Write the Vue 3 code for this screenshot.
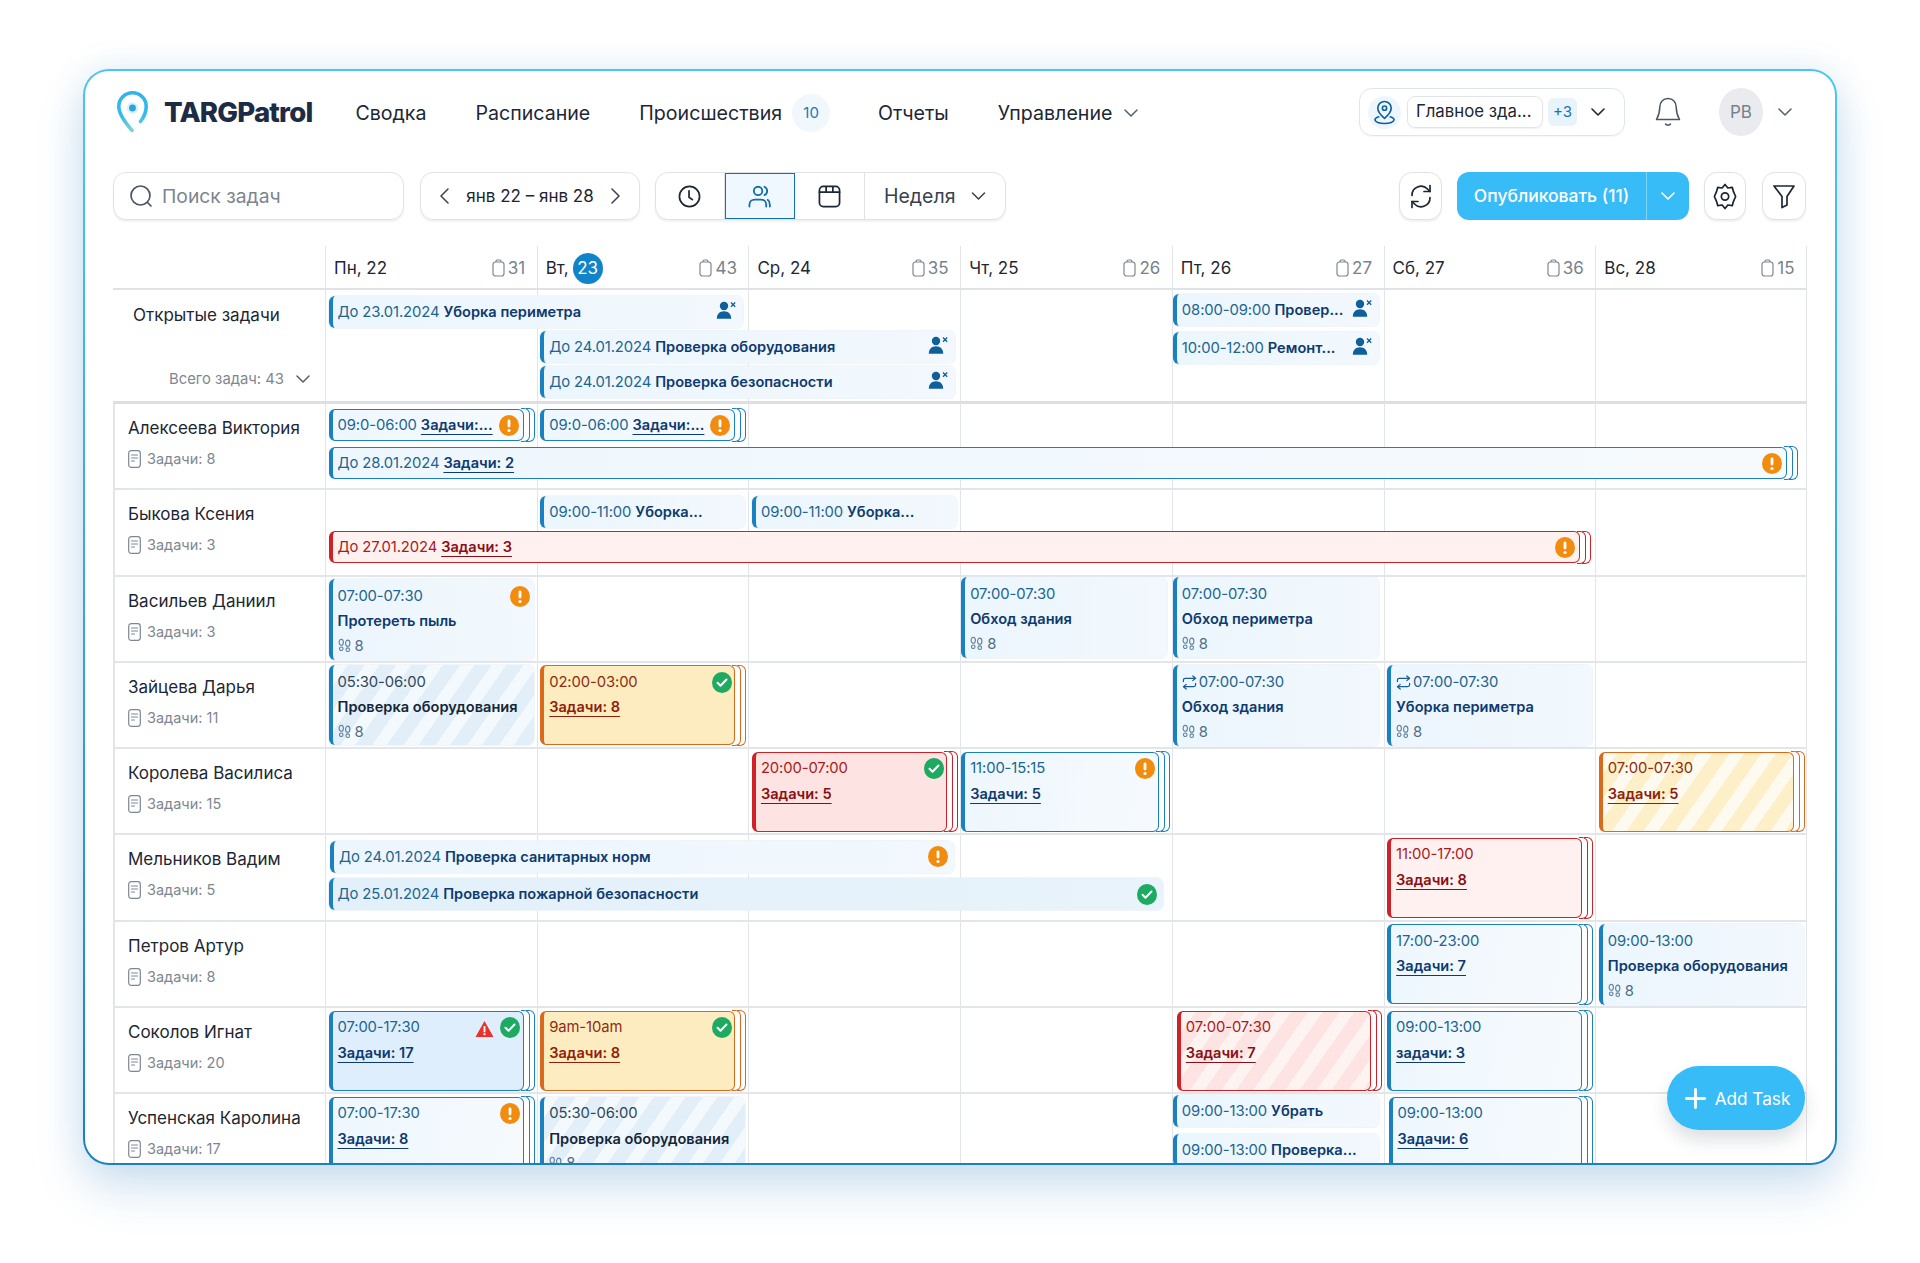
<script setup>
const days = [
  { label: 'Пн, 22', count: 31 },
  { label: 'Вт,', today: '23', count: 43 },
  { label: 'Ср, 24', count: 35 },
  { label: 'Чт, 25', count: 26 },
  { label: 'Пт, 26', count: 27 },
  { label: 'Сб, 27', count: 36 },
  { label: 'Вс, 28', count: 15 }
]

const rows = [
  {
    name: 'Алексеева Виктория', tasks: 8, lanes: 'lanes-a',
    events: [
      { col: 1, lane: 1, chip: true, tone: 'blue', stack: true, time: '09:0-06:00', title: 'Задачи:...', link: true, icon: 'alert' },
      { col: 2, lane: 1, chip: true, tone: 'blue', stack: true, time: '09:0-06:00', title: 'Задачи:...', link: true, icon: 'alert' },
      { col: 1, span: 7, lane: 2, chip: true, tone: 'blue', stack: true, time: 'До 28.01.2024', title: 'Задачи: 2', link: true, icon: 'alert', inset: 20 }
    ]
  },
  {
    name: 'Быкова Ксения', tasks: 3, lanes: 'lanes-b',
    events: [
      { col: 2, lane: 1, chip: true, plain: true, tone: 'blue', time: '09:00-11:00', title: 'Уборка...' },
      { col: 3, lane: 1, chip: true, plain: true, tone: 'blue', time: '09:00-11:00', title: 'Уборка...' },
      { col: 1, span: 6, lane: 2, chip: true, tone: 'red', stack: true, time: 'До 27.01.2024', title: 'Задачи: 3', link: true, icon: 'alert', inset: 15 }
    ]
  },
  {
    name: 'Васильев Даниил', tasks: 3,
    events: [
      { col: 1, plain: true, tone: 'blue', time: '07:00-07:30', title: 'Протереть пыль', foot: true, icon: 'alert' },
      { col: 4, plain: true, tone: 'blue', nudge: true, high: true, time: '07:00-07:30', title: 'Обход здания', foot: true },
      { col: 5, plain: true, tone: 'blue', nudge: true, high: true, time: '07:00-07:30', title: 'Обход периметра', foot: true }
    ]
  },
  {
    name: 'Зайцева Дарья', tasks: 11,
    events: [
      { col: 1, plain: true, stripe: true, tone: 'slate', time: '05:30-06:00', title: 'Проверка оборудования', foot: true },
      { col: 2, tone: 'orange', stack: true, time: '02:00-03:00', title: 'Задачи: 8', link: true, icon: 'check' },
      { col: 5, plain: true, tone: 'blue', nudge: true, repeat: true, time: '07:00-07:30', title: 'Обход здания', foot: true },
      { col: 6, plain: true, tone: 'blue', repeat: true, time: '07:00-07:30', title: 'Уборка периметра', foot: true }
    ]
  },
  {
    name: 'Королева Василиса', tasks: 15,
    events: [
      { col: 3, tone: 'red', strong: true, stack: true, time: '20:00-07:00', title: 'Задачи: 5', link: true, icon: 'check' },
      { col: 4, tone: 'blue', nudge: true, stack: true, time: '11:00-15:15', title: 'Задачи: 5', link: true, icon: 'alert' },
      { col: 7, stripe: true, tone: 'orange', stack: true, time: '07:00-07:30', title: 'Задачи: 5', link: true }
    ]
  },
  {
    name: 'Мельников Вадим', tasks: 5, lanes: 'lanes-c',
    events: [
      { col: 1, span: 3, lane: 1, chip: true, plain: true, tone: 'blue', shift: true, time: 'До 24.01.2024', title: 'Проверка санитарных норм', icon: 'alert', inset: 6 },
      { col: 1, span: 4, lane: 2, chip: true, plain: true, deep: true, tone: 'blue', time: 'До 25.01.2024', title: 'Проверка пожарной безопасности', icon: 'check', inset: 9 },
      { col: 6, tone: 'red', stack: true, time: '11:00-17:00', title: 'Задачи: 8', link: true }
    ]
  },
  {
    name: 'Петров Артур', tasks: 8,
    events: [
      { col: 6, tone: 'blue', stack: true, time: '17:00-23:00', title: 'Задачи: 7', link: true },
      { col: 7, plain: true, tone: 'blue', time: '09:00-13:00', title: 'Проверка оборудования', foot: true }
    ]
  },
  {
    name: 'Соколов Игнат', tasks: 20,
    events: [
      { col: 1, tone: 'blue', strong: true, stack: true, time: '07:00-17:30', title: 'Задачи: 17', link: true, icon: 'check', warn: true },
      { col: 2, tone: 'orange', stack: true, time: '9am-10am', title: 'Задачи: 8', link: true, icon: 'check' },
      { col: 5, stripe: true, tone: 'red', stack: true, shift: true, time: '07:00-07:30', title: 'Задачи: 7', link: true },
      { col: 6, tone: 'blue', stack: true, time: '09:00-13:00', title: 'задачи: 3', link: true }
    ]
  },
  {
    name: 'Успенская Каролина', tasks: 17, lanes: 'lanes-d',
    events: [
      { col: 1, tone: 'blue', stack: true, time: '07:00-17:30', title: 'Задачи: 8', link: true, icon: 'alert' },
      { col: 2, plain: true, stripe: true, tone: 'slate', time: '05:30-06:00', title: 'Проверка оборудования', foot: true },
      { col: 5, lane: 1, chip: true, plain: true, tone: 'blue', nudge: true, time: '09:00-13:00', title: 'Убрать' },
      { col: 5, lane: 2, chip: true, plain: true, tone: 'blue', nudge: true, time: '09:00-13:00', title: 'Проверка...' },
      { col: 6, tone: 'blue', stack: true, shift: true, time: '09:00-13:00', title: 'Задачи: 6', link: true }
    ]
  }
]

const openTasks = [
  { col: 1, lane: 1, time: 'До 23.01.2024', title: 'Уборка периметра', span: 2, inset: 5 },
  { col: 2, lane: 2, time: 'До 24.01.2024', title: 'Проверка оборудования', span: 2, inset: 5 },
  { col: 2, lane: 3, time: 'До 24.01.2024', title: 'Проверка безопасности', span: 2, inset: 5 },
  { col: 5, lane: 1, time: '08:00-09:00', title: 'Провер...', nudge: true, lift: 'up' },
  { col: 5, lane: 2, time: '10:00-12:00', title: 'Ремонт...', nudge: true, lift: 'down' }
]

function place(ev) {
  const style = { gridColumn: `${ev.col + 1} / span ${ev.span || 1}` }
  if (ev.lane) style.gridRow = String(ev.lane)
  if (ev.inset) style.marginRight = `${ev.inset}px`
  return style
}

function classes(ev) {
  return [
    ev.chip ? 'chip' : 'tall',
    `tone-${ev.tone}`,
    {
      plain: ev.plain,
      stack: ev.stack,
      stripe: ev.stripe,
      strong: ev.strong,
      nudge: ev.nudge,
      shift: ev.shift,
      high: ev.high,
      deep: ev.deep
    }
  ]
}
</script>

<template>
  <div class="page">
    <div class="card">
      <header class="topbar">
        <div class="brand">
          <svg class="pin" viewBox="0 0 31 42" fill="none">
            <defs>
              <linearGradient id="pinG" x1="0" y1="0" x2="0" y2="42" gradientUnits="userSpaceOnUse">
                <stop offset="0" stop-color="#2db3f1" />
                <stop offset="0.6" stop-color="#39bbe8" />
                <stop offset="1" stop-color="#8ad8cc" />
              </linearGradient>
            </defs>
            <path d="M23.5 30.5C27 26 29.2 20.5 29.2 15.5A13.7 13.7 0 0 0 1.8 15.5C1.8 22 8.5 32 15 39.5" stroke="url(#pinG)" stroke-width="3.6" stroke-linecap="round" />
            <circle cx="15.5" cy="17" r="5.8" fill="#d8f0fb" />
            <circle cx="15.5" cy="17" r="3.4" fill="#2aa3da" />
          </svg>
          <span class="brand-name">TARGPatrol</span>
        </div>
        <nav class="nav">
          <a>Сводка</a>
          <a>Расписание</a>
          <a class="with-badge">Происшествия<span class="badge">10</span></a>
          <a>Отчеты</a>
          <a class="with-chev">Управление
            <svg class="chev" viewBox="0 0 14 8" fill="none"><path d="M1 1l6 6 6-6" stroke="#56606c" stroke-width="1.5" stroke-linecap="round" stroke-linejoin="round" /></svg>
          </a>
        </nav>
        <div class="top-right">
          <div class="location">
            <span class="loc-icon">
              <svg viewBox="0 0 24 26" fill="none" stroke="#0f5f9c" stroke-width="1.7" stroke-linecap="round" stroke-linejoin="round">
                <path d="M12 2a7 7 0 0 0-7 7c0 4 3.800 7.800 7 10.600 3.200-2.800 7-6.600 7-10.600a7 7 0 0 0-7-7z" />
                <circle cx="12" cy="9" r="2.200" />
                <path d="M6 18c-2.500.8-4 2-4 3.200C2 23.300 6.500 25 12 25s10-1.700 10-3.800c0-1.200-1.500-2.400-4-3.200" />
              </svg>
            </span>
            <span class="loc-chip">Главное зда...</span>
            <span class="loc-more">+3</span>
            <svg class="chev dark" viewBox="0 0 14 8" fill="none"><path d="M1 1l6 6 6-6" stroke="#1d2733" stroke-width="1.6" stroke-linecap="round" stroke-linejoin="round" /></svg>
          </div>
          <svg class="bell" viewBox="0 0 26 30" fill="none" stroke="#4b5563" stroke-width="1.5" stroke-linecap="round" stroke-linejoin="round">
            <path d="M13 1.500c-5 0-8.200 4-8.200 8.500 0 6-1.300 9-3.300 12.500h23c-2-3.500-3.300-6.500-3.300-12.500 0-4.500-3.200-8.500-8.200-8.500z" />
            <path d="M10.500 27c1 1.500 4 1.500 5 0" />
          </svg>
          <span class="avatar">РВ</span>
          <svg class="chev" viewBox="0 0 14 8" fill="none"><path d="M1 1l6 6 6-6" stroke="#56606c" stroke-width="1.5" stroke-linecap="round" stroke-linejoin="round" /></svg>
        </div>
      </header>

      <div class="toolbar">
        <label class="search">
          <svg viewBox="0 0 24 24" fill="none" stroke="#4b5563" stroke-width="1.7" stroke-linecap="round"><circle cx="11.500" cy="11.500" r="9.500" /><path d="M18.500 18.500l3.500 3.500" /></svg>
          <span>Поиск задач</span>
        </label>
        <div class="dates">
          <svg viewBox="0 0 9 16" fill="none"><path d="M8 1L1 8l7 7" stroke="#39424e" stroke-width="1.5" stroke-linecap="round" stroke-linejoin="round" /></svg>
          <span>янв 22 – янв 28</span>
          <svg viewBox="0 0 9 16" fill="none"><path d="M1 1l7 7-7 7" stroke="#39424e" stroke-width="1.5" stroke-linecap="round" stroke-linejoin="round" /></svg>
        </div>
        <div class="segments">
          <button class="seg">
            <svg viewBox="0 0 24 24" fill="none" stroke="#1d2733" stroke-width="1.8" stroke-linecap="round" stroke-linejoin="round"><circle cx="12" cy="12" r="10.5" /><path d="M11.500 6v6.800l3.500 2.500" /></svg>
          </button>
          <button class="seg active">
            <svg viewBox="0 0 24 24" fill="none" stroke="#136ca8" stroke-width="1.9" stroke-linecap="round" stroke-linejoin="round"><circle cx="10.500" cy="6.200" r="4.400" /><path d="M1.500 22.500v-1.800c0-3.500 2.500-5.500 5.500-5.500h6.500c3 0 5.500 2 5.500 5.500v1.800" /><path d="M17.200 1.800c1.800 1 2.800 2.600 2.800 4.400s-1 3.400-2.800 4.400" /><path d="M20.500 15.500c1.500 1 2.300 3 2.300 5v2" /></svg>
          </button>
          <button class="seg">
            <svg viewBox="0 0 24 24" fill="none" stroke="#1d2733" stroke-width="1.8" stroke-linecap="round" stroke-linejoin="round"><rect x="1.500" y="1.500" width="21" height="21" rx="4" /><path d="M1.500 7.500h21M8.500 2v5M15.500 2v5" /></svg>
          </button>
          <button class="seg week">Неделя
            <svg class="chev" viewBox="0 0 14 8" fill="none"><path d="M1 1l6 6 6-6" stroke="#39424e" stroke-width="1.5" stroke-linecap="round" stroke-linejoin="round" /></svg>
          </button>
        </div>
        <div class="tools">
          <button class="tool refresh">
            <svg viewBox="0 0 24 26" fill="none" stroke="#1d2733" stroke-width="1.7" stroke-linecap="round" stroke-linejoin="round"><path d="M3 12a9 9 0 0 1 15.500-6.500L21 8" /><path d="M21 2v6h-6" /><path d="M21 14a9 9 0 0 1-15.500 6.500L3 18" /><path d="M3 24v-6h6" /></svg>
          </button>
          <div class="publish">
            <span class="pub-label">Опубликовать (11)</span>
            <span class="pub-arrow">
              <svg class="chev" viewBox="0 0 14 8" fill="none"><path d="M1 1l6 6 6-6" stroke="#fff" stroke-width="1.6" stroke-linecap="round" stroke-linejoin="round" /></svg>
            </span>
          </div>
          <button class="tool gear">
            <svg viewBox="0 0 24 28" fill="none" stroke="#1d2733" stroke-width="1.8" stroke-linecap="round" stroke-linejoin="round"><path d="M12 1.500l3 3.700 4.500-.7 1.300 4.500L23 14l-2.200 5-1.300 4.500-4.500-.7-3 3.700-3-3.700-4.500.7L3.200 19 1 14l2.200-5 1.300-4.500 4.500.7z" /><circle cx="12" cy="14" r="3.800" /></svg>
          </button>
          <button class="tool filter">
            <svg viewBox="0 0 24 26" fill="none" stroke="#1d2733" stroke-width="1.7" stroke-linecap="round" stroke-linejoin="round"><path d="M2 2.500h20L15 13v8.500L10 24V13z" /></svg>
          </button>
        </div>
      </div>

      <div class="sheet">
        <div class="head-row">
          <div class="corner"></div>
          <div v-for="d in days" :key="d.label" class="day">
            <span class="day-name">{{ d.label }}<b v-if="d.today" class="today">{{ d.today }}</b></span>
            <span class="day-count">
              <svg viewBox="0 0 13 18" fill="none" stroke="#7d8792" stroke-width="1.2"><rect x="1" y="3" width="11" height="14" rx="2.500" /><path d="M4 3V2.200C4 1.500 4.500 1 5.200 1h2.600C8.500 1 9 1.500 9 2.200V3" /></svg>
              {{ d.count }}
            </span>
          </div>
        </div>

        <div class="row open-row">
          <div class="name-cell open-cell">
            <div class="open-title">Открытые задачи</div>
            <div class="open-total">Всего задач: 43
              <svg class="chev" viewBox="0 0 14 8" fill="none"><path d="M1 1l6 6 6-6" stroke="#56606c" stroke-width="1.5" stroke-linecap="round" stroke-linejoin="round" /></svg>
            </div>
          </div>
          <div v-for="c in 7" :key="c" class="cell" :style="{ gridColumn: c + 1 }"></div>
          <div v-for="(ev, i) in openTasks" :key="i" class="ev chip plain tone-blue" :class="[{ nudge: ev.nudge }, ev.lift]" :style="place(ev)">
            <span class="time">{{ ev.time }}</span>
            <span class="title">{{ ev.title }}</span>
            <svg class="user-x" viewBox="0 0 21 18" fill="#0f5f9c">
              <circle cx="8" cy="5" r="4.200" />
              <path d="M.8 17.800c0-4.800 3-7.500 7.200-7.500s7.200 2.700 7.200 7.500z" />
              <path d="M15 1.500l4.200 4.200M19.200 1.500L15 5.700" stroke="#0f5f9c" stroke-width="1.3" fill="none" />
            </svg>
          </div>
        </div>

        <div v-for="r in rows" :key="r.name" class="row person" :class="r.lanes">
          <div class="name-cell">
            <div class="person-name">{{ r.name }}</div>
            <div class="person-tasks">
              <svg viewBox="0 0 13 18" fill="none" stroke="#7d8792" stroke-width="1.2" stroke-linecap="round"><rect x=".7" y=".7" width="11.600" height="16.600" rx="2.500" /><path d="M3.500 5h6M3.500 8h6M3.500 11h3" /></svg>
              Задачи: {{ r.tasks }}
            </div>
          </div>
          <div v-for="c in 7" :key="c" class="cell" :style="{ gridColumn: c + 1 }"></div>
          <div v-for="(ev, i) in r.events" :key="i" class="ev" :class="classes(ev)" :style="place(ev)">
            <template v-if="ev.chip">
              <span class="time">{{ ev.time }}</span>
              <span class="title" :class="{ link: ev.link }">{{ ev.title }}</span>
              <svg v-if="ev.icon === 'alert'" class="status" viewBox="0 0 20 21"><ellipse cx="10" cy="10.500" rx="10" ry="10.500" fill="#f28c0f" /><rect x="8.600" y="4.500" width="2.800" height="8" rx="1.400" fill="#fff" /><circle cx="10" cy="15.500" r="1.600" fill="#fff" /></svg>
              <svg v-if="ev.icon === 'check'" class="status" viewBox="0 0 20 21"><ellipse cx="10" cy="10.500" rx="10" ry="10.500" fill="#1faa62" /><path d="M5.500 10.800l3 3 6-6.300" fill="none" stroke="#fff" stroke-width="2" stroke-linecap="round" stroke-linejoin="round" /></svg>
            </template>
            <template v-else>
              <div class="top-line">
                <span class="time">
                  <svg v-if="ev.repeat" class="repeat" viewBox="0 0 16 16" fill="none" stroke="#185d92" stroke-width="1.3" stroke-linecap="round" stroke-linejoin="round"><path d="M1.500 7V5.500c0-1.400 1-2 2-2h11M11.500 1l3 2.500-3 2.500" /><path d="M14.500 9v1.500c0 1.400-1 2-2 2h-11M4.500 15l-3-2.500 3-2.500" /></svg>{{ ev.time }}
                </span>
                <span class="status-wrap">
                  <svg v-if="ev.warn" class="status warn" viewBox="0 0 20 19"><path d="M10 1L19.500 18H.5z" fill="#e8322b" /><rect x="9" y="6.500" width="2" height="6.500" fill="#fff" /><rect x="9" y="14" width="2" height="2" fill="#fff" /></svg>
                  <svg v-if="ev.icon === 'alert'" class="status" viewBox="0 0 20 21"><ellipse cx="10" cy="10.500" rx="10" ry="10.500" fill="#f28c0f" /><rect x="8.600" y="4.500" width="2.800" height="8" rx="1.400" fill="#fff" /><circle cx="10" cy="15.500" r="1.600" fill="#fff" /></svg>
                  <svg v-if="ev.icon === 'check'" class="status" viewBox="0 0 20 21"><ellipse cx="10" cy="10.500" rx="10" ry="10.500" fill="#1faa62" /><path d="M5.500 10.800l3 3 6-6.300" fill="none" stroke="#fff" stroke-width="2" stroke-linecap="round" stroke-linejoin="round" /></svg>
                </span>
              </div>
              <div class="title" :class="{ link: ev.link }"><span>{{ ev.title }}</span></div>
              <div v-if="ev.foot" class="foot">
                <svg viewBox="0 0 14 15" fill="none" stroke="#5f7f9c" stroke-width="1.2"><ellipse cx="3.500" cy="4" rx="2.300" ry="3.300" /><circle cx="3.500" cy="11" r="1.900" /><ellipse cx="10.500" cy="5" rx="2.300" ry="3.300" /><circle cx="10.500" cy="12" r="1.900" /></svg>
                8
              </div>
            </template>
          </div>
        </div>
      </div>

      <button class="fab">
        <svg viewBox="0 0 22 22" fill="none" stroke="#fff" stroke-width="3" stroke-linecap="round"><path d="M11 1.500v19M1.500 11h19" /></svg>
        Add Task
      </button>
    </div>
  </div>
</template>

<style>
html, body { margin: 0; background: #fff; }
</style>

<style scoped>
.page {
  width: 1920px;
  height: 1263px;
  box-sizing: border-box;
  padding: 69px 83px 0;
  overflow: hidden;
  background: #fff;
  font-family: Inter, "Noto Sans", sans-serif;
  color: #1d2733;
}
.card {
  position: relative;
  box-sizing: border-box;
  width: 1754px;
  height: 1096px;
  border: 2px solid transparent;
  border-radius: 26px;
  background: linear-gradient(#fff, #fff) padding-box, linear-gradient(180deg, #4cc5f5 0%, #2f9fd8 60%, #1a80c0 100%) border-box;
  box-shadow: 0 24px 48px rgba(40, 120, 190, .2), 0 0 34px rgba(60, 140, 200, .12);
  padding: 17px 29px 0 28px;
  overflow: hidden;
}

.topbar { display: flex; align-items: center; height: 48px; }
.brand { display: flex; align-items: center; margin-left: 4px; }
.pin { width: 31px; height: 42px; margin-right: 16px; }
.brand-name { font-family: Inter, sans-serif; font-weight: 800; font-size: 27.6px; letter-spacing: -.8px; color: #1e2b44; }
.nav { display: flex; align-items: center; gap: 49px; margin-left: 43px; padding-top: 1px; font-size: 19.6px; color: #1d2733; }
.with-badge { display: flex; align-items: center; }
.badge {
  width: 38px; height: 38px; border-radius: 50%; background: #f0f7fd; color: #1b79b6;
  font-size: 15px; display: flex; align-items: center; justify-content: center; margin: 0 -1px 0 10px;
}
.with-chev { display: flex; align-items: center; gap: 12px; }
.chev { width: 14px; height: 8px; flex: none; }
.top-right { display: flex; align-items: center; margin-left: auto; padding-right: 14px; }
.location {
  display: flex; align-items: center; box-sizing: border-box; width: 266px; height: 48px; margin-right: 1px;
  border: 1.5px solid #e1e5e9; border-radius: 13px; padding-left: 8px;
  box-shadow: 0 1px 2px rgba(0, 0, 0, .04);
}
.loc-icon { width: 33px; height: 33px; border-radius: 50%; background: #eef6fd; display: flex; align-items: center; justify-content: center; }
.loc-icon svg { width: 23px; height: 26px; }
.loc-chip {
  box-sizing: border-box; width: 136px; height: 32px; margin-left: 6px; border: 1.5px solid #e1e5e9; border-radius: 8px;
  font-size: 16.8px; line-height: 29px; padding-left: 8px; white-space: nowrap; box-shadow: 0 1px 2px rgba(0, 0, 0, .06);
}
.loc-more { width: 29px; height: 28px; margin-left: 5px; background: #e8f3fc; border-radius: 6px; color: #1c72ad; font-size: 15px; line-height: 28px; text-align: center; }
.chev.dark { margin-left: 14px; }
.bell { width: 26px; height: 30px; margin-left: 29px; }
.avatar { width: 44px; height: 48px; border-radius: 50%; background: #eaebee; color: #77818c; font-size: 17px; line-height: 48px; text-align: center; margin: 0 15px 0 38px; }

.toolbar { display: flex; align-items: stretch; height: 48px; margin-top: 36px; }
.search, .dates, .segments, .tool {
  box-sizing: border-box; border: 1.5px solid #dfe3e7; border-radius: 13px; background: #fff;
  box-shadow: 0 1.5px 2px rgba(0, 0, 0, .06);
}
.search { display: flex; align-items: center; width: 291px; padding-left: 15px; color: #7c858f; font-size: 19.3px; }
.search svg { width: 24px; height: 24px; margin-right: 9px; }
.dates { display: flex; align-items: center; justify-content: space-between; width: 220px; margin-left: 16px; padding: 0 19px; font-size: 17px; white-space: nowrap; }
.dates svg { width: 9px; height: 16px; }
.segments { display: flex; width: 351px; margin-left: 15px; overflow: hidden; }
.seg { width: 70px; height: 100%; background: none; border: 0; border-right: 1.5px solid #dfe3e7; padding: 0; display: flex; align-items: center; justify-content: center; font: inherit; color: #1d2733; flex: none; }
.seg:first-child { width: 68.5px; }
.seg svg { width: 23px; height: 23px; }
.seg.active { background: #eff8fe; outline: 1.5px solid #146fae; outline-offset: -1.5px; }
.seg.week { width: auto; flex: 1; border: 0; font-size: 19.5px; gap: 15px; color: #39424e; }
.seg.week .chev { width: 15px; height: 8px; }
.tools { display: flex; align-items: stretch; margin-left: auto; }
.tool { padding: 0; display: flex; align-items: center; justify-content: center; }
.tool svg { width: 24px; height: 27px; }
.refresh { width: 43px; }
.gear { width: 42px; margin-left: 15px; }
.filter { width: 44px; margin-left: 16px; }
.publish { display: flex; width: 232px; margin-left: 15px; background: #38bcf7; border-radius: 12px; color: #fff; }
.pub-label { flex: 1; font-size: 17.5px; font-weight: 500; line-height: 48px; text-align: center; }
.pub-arrow { width: 42px; border-left: 1.5px solid #7fd5fa; display: flex; align-items: center; justify-content: center; }

.sheet { margin-top: 26px; width: 1694px; }
.head-row, .row { display: grid; grid-template-columns: 212px repeat(7, minmax(0, 1fr)); }
.head-row { height: 44px; border-bottom: 2px solid #dfe2e6; box-sizing: border-box; }
.day { display: flex; align-items: center; justify-content: space-between; padding: 2px 11.5px 0 8px; border-left: 1.5px solid #e2e5e9; min-width: 0; }
.day:last-child { border-right: 1.5px solid #e2e5e9; }
.day-name { display: flex; align-items: center; font-size: 17px; gap: 4px; }
.today { width: 30px; height: 31px; border-radius: 50%; background: #0f84c8; color: #fff; font-weight: 400; line-height: 31px; text-align: center; }
.day-count { display: flex; align-items: center; color: #78828d; font-size: 17px; gap: 3px; }
.day-count svg { width: 13px; height: 18px; }

.row { position: relative; box-sizing: border-box; height: 86.3px; border-bottom: 2px solid #e2e5e9; grid-template-rows: 1fr; }
.row.open-row { height: 114px; border-bottom: 3px solid #dcdfe3; grid-template-rows: 37.5px 35px 35px 1fr; }
.row.lanes-a { grid-template-rows: 37px 38px 1fr; }
.row.lanes-b { grid-template-rows: 38px 35px 1fr; }
.row.lanes-c { grid-template-rows: 37.5px 37.5px 1fr; }
.row.lanes-d { grid-template-rows: 33px 39px 1fr; }

.name-cell { grid-column: 1; grid-row: 1 / -1; padding: 13px 0 0 13px; border-left: 2px solid #e2e5e9; }
.open-cell { border-left: 0; padding: 0; position: relative; }
.open-title { font-size: 17px; padding: 14px 0 0 20px; line-height: 22px; white-space: nowrap; }
.open-total { display: flex; align-items: center; justify-content: flex-end; gap: 12px; margin-top: 42px; padding-right: 15px; color: #7e8791; font-size: 14.8px; line-height: 22px; }
.person-name { font-size: 17px; line-height: 22px; white-space: nowrap; }
.person-tasks { display: flex; align-items: center; gap: 6px; margin-top: 10px; color: #7e8791; font-size: 14.5px; line-height: 20px; }
.person-tasks svg { width: 13px; height: 18px; }

.cell { grid-row: 1 / -1; border-left: 1.5px solid #e2e5e9; min-width: 0; }
.cell:nth-child(8) { border-right: 1.5px solid #e2e5e9; }

.ev {
  position: relative; z-index: 1; box-sizing: border-box; min-width: 0; border-radius: 6px;
  margin: 0 3px 0 3.5px; font-size: 14.8px; border: 1.6px solid; border-left-width: 4px; white-space: nowrap;
}
.ev.nudge { margin-left: 1px; margin-right: 5px; }
.ev.shift { margin-left: 5px; }
.ev.stack { margin-right: 13px; }
.ev.stack::before, .ev.stack::after {
  content: ''; position: absolute; top: -1.6px; bottom: -1.6px; width: 8px; border: 1.4px solid; border-left: 0; border-color: inherit; border-radius: 0 6px 6px 0;
}
.ev.stack::before { right: -7px; }
.ev.stack::after { right: -12px; }
.ev.plain { border-width: 0 0 0 4px; box-shadow: 0 0 0 1px rgba(225, 235, 243, .5); }

.chip { display: flex; align-items: center; height: 32px; align-self: end; padding: 0 4px 0 5px; }
.chip.plain { padding-right: 6px; }
.chip .title { margin-left: 4px; }
.chip .status { margin-left: auto; }
.chip .user-x { margin-left: auto; margin-right: 0; width: 21px; height: 18px; margin-top: -4px; flex: none; }
.chip.up { margin-bottom: 1.5px; }
.chip.down { margin-bottom: -1.5px; }
.tall { grid-row: 1 / -1; height: 80px; margin-top: 2.5px; padding: 5.5px 2.5px 0 5px; }
.tall.plain { padding: 6.5px 4px 0 5px; }
.tall.plain.tone-blue { height: 81px; }
.tall.high { margin-top: 0.5px; }
.top-line { display: flex; align-items: flex-start; justify-content: space-between; height: 23.5px; }
.tall .time { display: flex; align-items: center; line-height: 21px; }
.tall .title { line-height: 24.5px; }
.status-wrap { display: flex; align-items: center; gap: 6px; }
.status { width: 20px; height: 21px; flex: none; }
.status.warn { width: 19px; height: 18px; margin-top: 3px; }
.repeat { width: 15px; height: 15px; margin-right: 2px; }
.time { letter-spacing: -.1px; }
.title { font-weight: 600; font-size: 14.6px; }
.link span, .chip .title.link { text-decoration: underline; text-underline-offset: 3.5px; text-decoration-thickness: 1px; }
.foot { display: flex; align-items: center; gap: 4px; line-height: 24px; color: #4f6d87; font-size: 14.8px; }
.foot svg { width: 13px; height: 15px; }

.tone-blue { border-color: #1a80bf; background: linear-gradient(90deg, #ecf6fe, #f2f8fd); color: #21648f; }
.tone-blue .title { color: #0e3a6f; }
.tone-blue.deep { background: linear-gradient(90deg, #e2f0fb, #e8f3fb); }
.tone-blue:not(.plain) { background: linear-gradient(100deg, #eef7fe, #f6fafd); }
.tone-blue.strong.stack { background: #dfeefc; }
.tone-slate { border-color: #1a80bf; color: #30475a; }
.tone-slate .title { color: #14263a; }
.tone-red { border-color: #cf2127; background: #fff1ef; color: #a81c1c; }
.tone-red .title { color: #8a0f14; }
.tone-red.strong { background: #fde3e1; }
.tone-orange { border-color: #d9691b; background: #fdecc0; color: #8d2d12; }
.tone-orange .title { color: #8f1f0a; }
.stripe.tone-slate { background: repeating-linear-gradient(125deg, #f3f9fd 0 12px, #e2eff9 12px 26px); }
.stripe.tone-orange { background: repeating-linear-gradient(125deg, #fefaf0 0 12px, #fdf0c8 12px 26px); }
.stripe.tone-red { background: repeating-linear-gradient(125deg, #fdf3f1 0 12px, #fde4e2 12px 26px); }

.fab {
  position: absolute; z-index: 3; right: 30px; bottom: 33px; width: 138px; height: 64px; border: 0; border-radius: 32px;
  background: #38bcf7; color: #fff; font: inherit; font-size: 17.2px; display: flex; align-items: center; justify-content: center; gap: 9px; padding: 0 0 0 3px;
  box-shadow: 0 10px 18px rgba(40, 60, 80, .16);
}
.fab svg { width: 21px; height: 21px; }
</style>
